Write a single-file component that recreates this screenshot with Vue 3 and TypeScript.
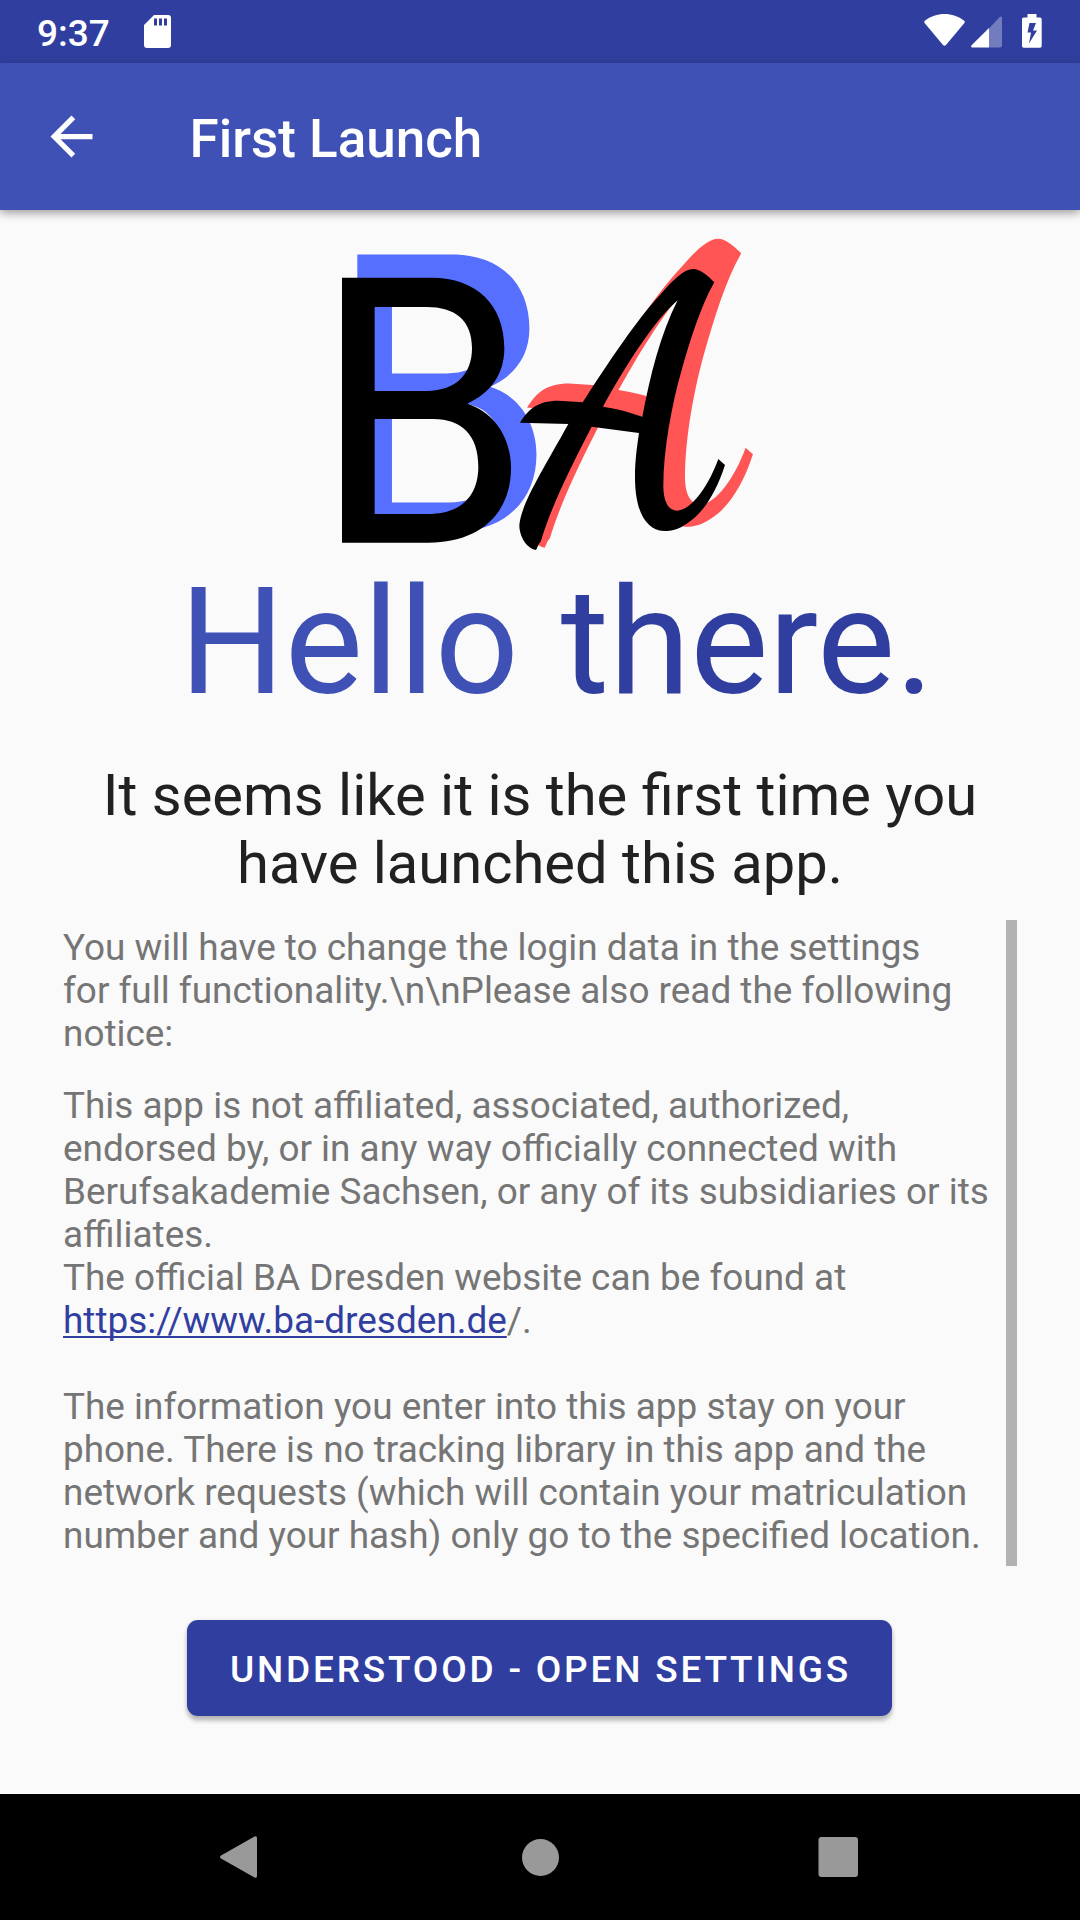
<script setup lang="ts">
const title = 'First Launch'
const subtitle = ['It seems like it is the first time you', 'have launched this app.']
const intro = [
  'You will have to change the login data in the settings',
  'for full functionality.\\n\\nPlease also read the following',
  'notice:',
]
const disclaimer = [
  'This app is not affiliated, associated, authorized,',
  'endorsed by, or in any way officially connected with',
  'Berufsakademie Sachsen, or any of its subsidiaries or its',
  'affiliates.',
  'The official BA Dresden website can be found at',
]
const website = 'https://www.ba-dresden.de'
const privacy = [
  'The information you enter into this app stay on your',
  'phone. There is no tracking library in this app and the',
  'network requests (which will contain your matriculation',
  'number and your hash) only go to the specified location.',
]
// Both halves of the logo are drawn twice: a coloured layer behind a black one.
const block =
  'M66 173H335C470 173 553 255 553 385C553 465 510 520 442 551C520 575 573 650 573 745C573 880 480 968 325 968H66ZM164 261V513H320C410 513 456 460 456 385C456 300 405 261 320 261ZM164 597V882H325C420 882 475 830 475 740C475 645 425 597 340 597Z'
const brush =
  'M60 608C85 568 112 542 175 542L248 547C330 420 410 300 480 225C520 178 553 147 580 147C600 147 625 168 643 187C600 262 568 370 545 450C515 555 490 690 490 800C491 850 508 872 533 872C575 868 625 800 655 717L675 735C648 820 607 882 560 911C537 927 515 933 492 933C435 930 405 870 405 770C405 720 411 680 417 639L275 620C205 755 150 870 122 965C114 972 112 985 108 990C80 985 58 950 58 915C65 850 120 765 205 612ZM533 241C465 298 375 440 309 560C350 566 390 577 427 590C450 470 480 345 533 241Z'
</script>

<template>
  <div class="screen">
    <header class="status">
      <span class="clock">9:37</span>
      <svg class="sd" width="27" height="33" viewBox="0 0 27 33">
        <path fill="#fff" fill-rule="evenodd" d="M10 0H24Q27 0 27 3V30Q27 33 24 33H3Q0 33 0 30V10ZM10 3.5V10.5H13V3.5ZM15 3.5V10.5H18V3.5ZM20 3.5V10.5H23V3.5Z" />
      </svg>
      <span class="grow"></span>
      <svg class="wifi" width="41" height="33" viewBox="0 0 41 33">
        <path fill="#fff" d="M.8 6.800C12-2.200 29-2.200 40.200 6.800Q41.200 7.800 40.400 9L22 31Q20.500 32.500 19 31L.6 9Q-.2 7.800.8 6.800Z" />
      </svg>
      <svg class="signal" width="31" height="32" viewBox="0 0 31 32">
        <path fill="#fff" fill-opacity=".32" d="M18 12.500L28.500 1.200Q31-.5 31 2.500V29.500Q31 31.500 29 31.500H18Z" />
        <path fill="#fff" d="M18 12V31.500H1.500Q-.8 31.200.6 29.300Z" />
      </svg>
      <svg class="battery" width="20" height="34" viewBox="0 0 20 34">
        <path fill="#fff" fill-rule="evenodd" d="M5.500 0H14.500V3.500H18Q19.700 3.500 19.700 5.200V32Q19.700 33.700 18 33.700H1.700Q0 33.700 0 32V5.200Q0 3.500 1.700 3.500H5.500ZM7.500 9L5.500 18.500H9L7 29.500L15 16.500H11L14 9Z" />
      </svg>
    </header>

    <div class="appbar">
      <svg class="back" width="63" height="63" viewBox="0 0 24 24">
        <path fill="#fff" d="M20 11H7.830l5.590-5.590L12 4l-8 8 8 8 1.410-1.410L7.830 13H20v-2z" />
      </svg>
      <h1>{{ title }}</h1>
    </div>

    <main>
      <svg class="logo" width="440" height="340" viewBox="320 220 440 340" fill-rule="evenodd">
        <g transform="translate(320 220) scale(.33333)">
          <path fill="#566fff" transform="matrix(1.060 0 0 1.049 42 -78)" :d="block" />
        </g>
        <g transform="translate(500 220) scale(.33333)">
          <path fill="#ff5555" transform="matrix(1.102 0 0 1.100 15 -105.700)" :d="brush" />
        </g>
        <g transform="translate(320 220) scale(.33333)">
          <path :d="block" />
        </g>
        <g transform="translate(500 220) scale(.33333)">
          <path :d="brush" />
        </g>
      </svg>

      <div class="hello"><span>Hello</span><span class="dark">there.</span></div>

      <p class="subtitle">
        <span v-for="line in subtitle" :key="line" class="line">{{ line }}</span>
      </p>

      <section class="notice">
        <div class="copy">
          <p class="intro">
            <span v-for="line in intro" :key="line" class="line">{{ line }}</span>
          </p>
          <p>
            <span v-for="line in disclaimer" :key="line" class="line">{{ line }}</span>
            <span class="line"><a>{{ website }}</a>/.</span>
          </p>
          <p class="privacy">
            <span v-for="line in privacy" :key="line" class="line">{{ line }}</span>
          </p>
        </div>
        <div class="scrollbar"></div>
      </section>

      <button type="button">UNDERSTOOD - OPEN SETTINGS</button>
    </main>

    <nav>
      <svg width="1080" height="126" viewBox="0 0 1080 126" fill="#999">
        <path d="M221 61.500L254.500 42.500Q257 41.500 257 44V82Q257 84.500 254.500 83.500L221 64.500Q219 63 221 61.500Z" />
        <circle cx="540.500" cy="63.500" r="18.500" />
        <rect x="818.500" y="43" width="39.500" height="40" rx="3" />
      </svg>
    </nav>
  </div>
</template>

<style>
body {
  margin: 0;
  background: #fafafa;
}
</style>

<style scoped>
.screen {
  width: 1080px;
  height: 1920px;
  display: flex;
  flex-direction: column;
  background: #fafafa;
  font-family: Roboto, "Liberation Sans", sans-serif;
  overflow: hidden;
}
svg {
  display: block;
  flex: none;
}
.status {
  height: 63px;
  flex: none;
  display: flex;
  align-items: flex-start;
  background: #303f9f;
  box-sizing: border-box;
  padding: 0 38px 0 37px;
}
.clock {
  width: 106.500px;
  margin-top: 12px;
  font-size: 37px;
  line-height: 44px;
  font-weight: 500;
  color: #fff;
}
.sd {
  margin-top: 15px;
}
.grow {
  flex: 1;
}
.wifi {
  margin-top: 14px;
}
.signal {
  margin: 15.500px 20px 0 6px;
}
.battery {
  margin-top: 14px;
}
.appbar {
  height: 147px;
  flex: none;
  display: flex;
  align-items: center;
  background: #3f51b5;
  padding-left: 39.500px;
  box-shadow: 0 3px 9px rgba(0, 0, 0, 0.38);
  z-index: 1;
}
.back {
  margin-top: -1px;
}
h1 {
  margin: 4px 0 0 87px;
  font-size: 53px;
  line-height: 62px;
  font-weight: 500;
  color: #fff;
  white-space: nowrap;
}
main {
  flex: 1;
  display: flex;
  flex-direction: column;
  align-items: center;
}
.logo {
  margin-top: 10px;
}
.hello {
  align-self: stretch;
  display: flex;
  gap: 42px;
  margin-top: -3px;
  padding-left: 179.500px;
  font-size: 147.500px;
  line-height: 172px;
  color: #3f51b5;
}
.dark {
  color: #303f9f;
}
p {
  margin: 0;
}
.line {
  display: block;
  white-space: nowrap;
}
.subtitle {
  margin-top: 32px;
  text-align: center;
  font-size: 57.900px;
  line-height: 68px;
  color: #212121;
}
.notice {
  align-self: stretch;
  display: flex;
  justify-content: space-between;
  height: 646px;
  margin: 23px 63px 0;
}
.copy {
  padding-top: 6px;
  font-size: 36.920px;
  line-height: 43px;
  color: #757575;
}
.intro {
  margin-bottom: 29px;
}
.privacy {
  margin-top: 43px;
}
a {
  color: #303f9f;
  text-decoration: underline;
  text-decoration-thickness: 2px;
  text-underline-offset: 3px;
  text-decoration-skip-ink: none;
}
.scrollbar {
  width: 11px;
  background: #b2b2b2;
}
button {
  width: 705px;
  height: 96px;
  margin: 54px 1px 0 0;
  padding: 2px 0 0 2px;
  border: 0;
  border-radius: 11px;
  background: #303f9f;
  color: #fff;
  font: 500 37px/43px Roboto, sans-serif;
  letter-spacing: 2.800px;
  white-space: nowrap;
  box-shadow: 0 5px 4px rgba(0, 0, 0, 0.22), 0 1px 5px rgba(0, 0, 0, 0.12);
}
nav {
  height: 126px;
  flex: none;
  background: #000;
}
</style>
